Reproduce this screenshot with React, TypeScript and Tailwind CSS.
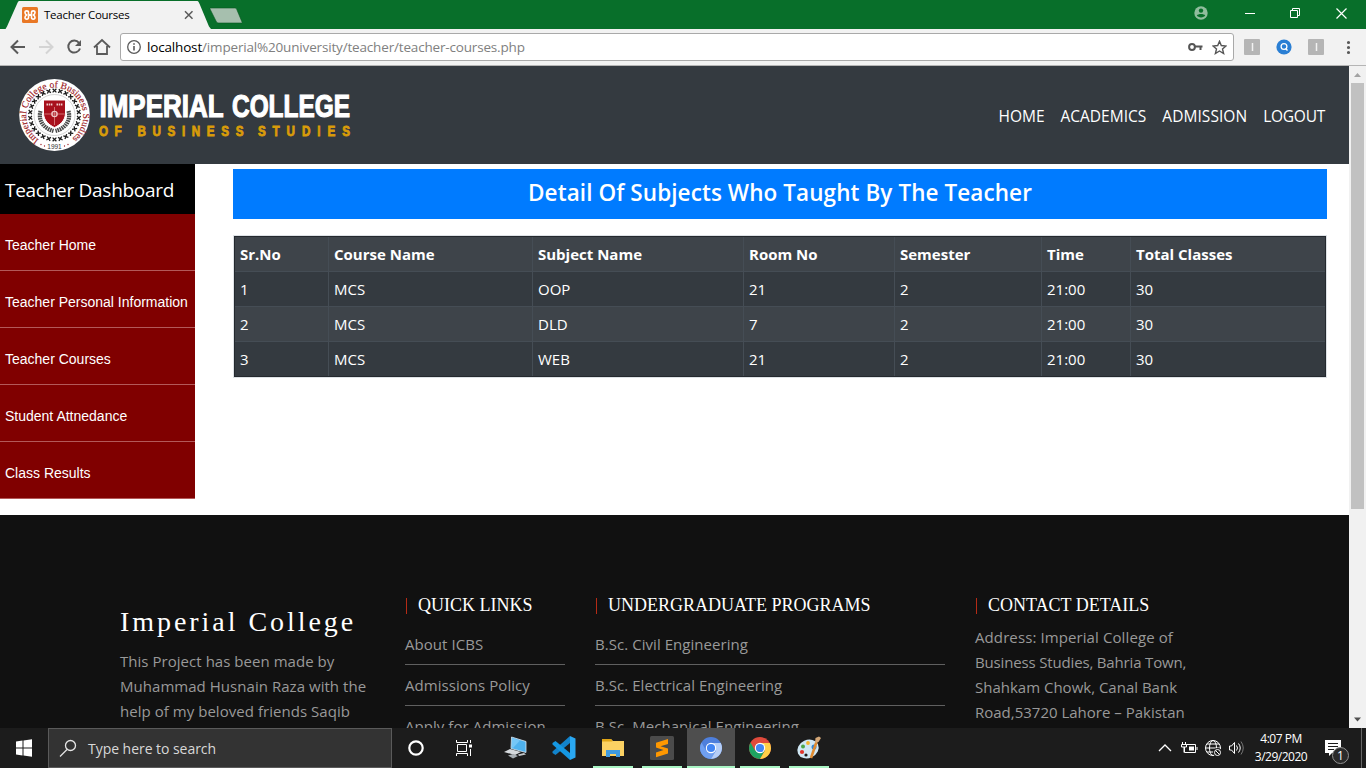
import React from 'react';

const SEGOE = "font-['Open_Sans','Noto_Sans',sans-serif]";

function TopIcons() {
  return (
    <div className="flex h-[26px] items-center text-white">
      <svg className="mr-[37px]" width="14" height="14" viewBox="0 0 14 14">
        <circle cx="7" cy="7" r="6.7" fill="#90bd9d" />
        <circle cx="7" cy="4.6" r="2.2" fill="#086f2a" />
        <path d="M2.8 9.6C4 7.6 10 7.6 11.2 9.6C10 12 4 12 2.8 9.6Z" fill="#086f2a" />
      </svg>
      <svg className="mr-[35px]" width="10" height="10" viewBox="0 0 10 10">
        <path d="M0 5.5H10" stroke="white" />
      </svg>
      <svg className="mr-[36px]" width="10" height="10" viewBox="0 0 10 10" fill="none" stroke="white">
        <path d="M0.5 2.5h7v7h-7zM2.5 2.5v-2h7v7h-2" />
      </svg>
      <svg className="mr-[19px]" width="11" height="11" viewBox="0 0 11 11">
        <path d="M0.5 0.5L10.5 10.5M10.5 0.5L0.5 10.5" stroke="white" strokeWidth="1.2" />
      </svg>
    </div>
  );
}

function TitleBar() {
  return (
    <div className="relative flex h-[29px] justify-end bg-[#086f2a]">
      <svg className="absolute left-0 top-0" width="250" height="29" viewBox="0 0 250 29">
        <path d="M5.500 29L7 26.500L17 4C18 1.500 18.500 1 20 1H196.500C198 1 198.600 1.500 199.600 4L209 26.500L211 29Z" fill="#f2f2f2" />
        <path d="M211 8H234.500C236 8 236.500 8.500 237 10L242 22C242.300 23 242 23 241 23H219C217.500 23 216.500 22.500 216 21L210 9C209.800 8 210 8 211 8Z" fill="#a6bfae" stroke="#07551f" strokeWidth="0.600" />
        <rect x="22" y="7" width="16" height="16" rx="1.500" fill="#e97826" />
        <path d="M28.500 12.500C28.500 10.300 25 10.300 25 12.500C25 14 25.800 14.500 26.600 15C25.800 15.500 25 16 25 17.500C25 19.700 28.500 19.700 28.500 17.500V16.200C28.500 14.600 31.500 15.400 31.500 13.800V12.500C31.500 10.300 35 10.300 35 12.500C35 14 34.200 14.500 33.400 15C34.200 15.500 35 16 35 17.500C35 19.700 31.500 19.700 31.500 17.500V16.200C31.500 14.600 28.500 15.400 28.500 13.800Z" fill="none" stroke="white" strokeWidth="1.600" />
        <path d="M185 11.300l7.500 7.500M192.500 11.300l-7.500 7.500" stroke="#5a5a5a" strokeWidth="1.500" />
      </svg>
      <span className={`${SEGOE} absolute left-[44px] top-[7px] text-[11.5px] leading-4 tracking-[-0.25px] whitespace-nowrap text-black`}>Teacher Courses</span>
      <TopIcons />
    </div>
  );
}

function Toolbar() {
  return (
    <div className="flex h-[37px] items-center border-b border-[#b5b5b5] bg-[#f2f2f2]">
      <svg width="120" height="36" viewBox="0 0 120 36" fill="none" strokeWidth="2">
        <path d="M25 18H12M18 11.500L11.500 18L18 24.500" stroke="#5a5a5a" />
        <path d="M39 18H52M46 11.500L52.500 18L46 24.500" stroke="#d4d4d4" />
        <path d="M79 13.800A6 6 0 1 0 80 19.500" stroke="#5a5a5a" />
        <path d="M81 11V17H75Z" fill="#5a5a5a" />
        <path d="M94 18.500L102 11L110 18.500M97 17V25H107V17" stroke="#5a5a5a" strokeWidth="1.800" />
      </svg>
      <div className="flex h-7 w-[1114px] items-center rounded-[3px] border border-[#a9a9a9] bg-white">
        <svg className="ml-[5px]" width="16" height="16" viewBox="0 0 16 16" fill="none" stroke="#5a5a5a">
          <circle cx="8" cy="8" r="6.300" strokeWidth="1.300" />
          <path d="M8 7V11.500M8 4.200V5.800" strokeWidth="1.600" />
        </svg>
        <span className={`${SEGOE} ml-[5px] grow text-[13.5px] tracking-[-0.17px] whitespace-nowrap text-[#808080]`}><span className="text-black">localhost</span>/imperial%20university/teacher/teacher-courses.php</span>
        <svg className="mr-[9px]" width="15" height="10" viewBox="0 0 15 10" fill="none" stroke="#555" strokeWidth="2">
          <circle cx="4" cy="5" r="2.900" />
          <path d="M7 4.500H14.500M12.500 4V8" />
        </svg>
        <svg className="mr-1.5" width="15" height="15" viewBox="0 0 15 15" fill="none" stroke="#555" strokeWidth="1.400">
          <path d="M7.500 1.300L9.300 5.500L14 6L10.500 9L11.600 13.500L7.500 11L3.400 13.500L4.500 9L1 6L5.700 5.500Z" />
        </svg>
      </div>
      <svg className="shrink-0" width="132" height="36" viewBox="0 0 132 36">
        <rect x="10" y="10" width="16" height="16" rx="1" fill="#b5b5b5" />
        <path d="M18.500 14V22" stroke="#f2f2f2" strokeWidth="1.500" />
        <circle cx="50" cy="18" r="7.600" fill="#2a7fd4" />
        <circle cx="50" cy="17.500" r="2.900" fill="none" stroke="white" strokeWidth="1.300" />
        <path d="M51.500 19.500L53.500 21.500" stroke="white" strokeWidth="1.400" />
        <rect x="74" y="10" width="16" height="16" rx="1" fill="#b5b5b5" />
        <path d="M82.500 14V22" stroke="#f2f2f2" strokeWidth="1.500" />
        <path d="M114.500 13.500h0M114.500 18.500h0M114.500 23.500h0" stroke="#5a5a5a" strokeWidth="3.200" strokeLinecap="round" />
      </svg>
    </div>
  );
}

const crossAngles = Array.from({ length: 26 }, (_, i) => (i * 360) / 26);

function Seal() {
  return (
    <svg className="overflow-visible" width="72" height="74" viewBox="-36.5 -37 72 74">
      <defs>
        <path id="ring" d="M-15.500 24.800A28.500 28.500 0 1 1 19 22.500" />
      </defs>
      <ellipse rx="35.300" ry="36" fill="white" />
      <text className="font-['Liberation_Serif',serif]" fontSize="9.500" fill="#9c1822" stroke="#9c1822" strokeWidth="0.150">
        <textPath href="#ring" textLength="143" lengthAdjust="spacing">Imperial College of Business Studies</textPath>
      </text>
      {crossAngles.map((a) => (
        <path key={a} transform={`rotate(${a})`} d="M-1.900 -26.200L1.900 -22.600M1.900 -26.200L-1.900 -22.600" stroke="#1a1a1a" strokeWidth="1.300" />
      ))}
      <circle r="20.500" fill="none" stroke="#bbb" strokeWidth="0.600" />
      <path d="M-14 -4C-17 7 -9 14 -1 16M14 -4C17 7 9 14 1 16" fill="none" stroke="#4a4a4a" strokeWidth="4.200" strokeDasharray="1.600 0.700" />
      <path d="M-11 -15H11V-2C11 6 4.500 10.500 0 12.500C-4.500 10.500 -11 6 -11 -2Z" fill="#a8101c" stroke="white" strokeWidth="1" />
      <path d="M0 -8V10M-10 -1H10" stroke="#d88" strokeWidth="0.800" />
      <circle cy="-1" r="2.600" fill="none" stroke="#eec6c6" strokeWidth="1.400" />
      <path d="M-8 -10.500h6M2 -10.500h6" stroke="#ecc" strokeWidth="2" strokeDasharray="1.500 0.700" />
      <text y="33.800" textAnchor="middle" className="font-['Liberation_Sans',sans-serif]" fontSize="6.500" fill="#333">1991</text>
      <path d="M-13.500 29.500h0M-10 31h0M13.500 29.500h0M10 31h0" stroke="#9c1822" strokeWidth="1.300" strokeLinecap="round" />
    </svg>
  );
}

function SiteHeader() {
  return (
    <header className="flex h-[98px] shrink-0 items-center justify-between bg-[#343a40] pr-6 pl-[18px]">
      <div className="flex items-center">
        <Seal />
        <svg className="ml-2 overflow-visible" width="256" height="60" viewBox="0 0 256 60">
          <g className="font-['Liberation_Sans_Narrow','Liberation_Sans',sans-serif]" fontWeight="bold">
            <g fontSize="32" fill="white" stroke="white" strokeWidth="1.200">
              <text x="1.500" y="31.500" textLength="124" lengthAdjust="spacingAndGlyphs">IMPERIAL</text>
              <text x="134" y="31.500" textLength="118" lengthAdjust="spacingAndGlyphs">COLLEGE</text>
            </g>
            <g transform="scale(0.78 1)" fontSize="15" fill="#d99c09" stroke="#d99c09" strokeWidth="0.900">
              <text x="1.300" y="51.500" textLength="29">OF</text>
              <text x="50.500" y="51.500" textLength="136">BUSINESS</text>
              <text x="205" y="51.500" textLength="118">STUDIES</text>
            </g>
          </g>
        </svg>
      </div>
      <nav className="flex gap-4 pt-[3px] text-[15.5px] text-white">
        <a>HOME</a>
        <a>ACADEMICS</a>
        <a className="tracking-[0.06px]">ADMISSION</a>
        <a className="tracking-[-0.25px]">LOGOUT</a>
      </nav>
    </header>
  );
}

const menu = ['Teacher Home', 'Teacher Personal Information', 'Teacher Courses', 'Student Attnedance', 'Class Results'];

function Sidebar() {
  return (
    <aside className="w-[195px] shrink-0">
      <h2 className="flex h-[50px] items-center bg-black pt-0.5 pl-[5px] text-[19px] tracking-[-0.28px] whitespace-nowrap text-white">Teacher Dashboard</h2>
      {menu.map((item) => (
        <a key={item} className="flex h-[57px] items-center border-b border-[#b35959] bg-[#800000] pt-1.5 pl-[5px] font-['Liberation_Sans',sans-serif] text-sm whitespace-nowrap text-white">{item}</a>
      ))}
    </aside>
  );
}

const rows = [
  ['Sr.No', 'Course Name', 'Subject Name', 'Room No', 'Semester', 'Time', 'Total Classes'],
  ['1', 'MCS', 'OOP', '21', '2', '21:00', '30'],
  ['2', 'MCS', 'DLD', '7', '2', '21:00', '30'],
  ['3', 'MCS', 'WEB', '21', '2', '21:00', '30'],
];

function Courses() {
  return (
    <main className="mt-[5px] mr-[22px] ml-[38px] grow">
      <h1 className="flex h-[50px] items-center justify-center bg-[#007bff] pb-0.5 text-[22.5px] font-semibold tracking-[0.08px] text-white">Detail Of Subjects Who Taught By The Teacher</h1>
      <div className="mt-4 border border-[#dee2e6]">
        <div className="border border-[#24292e] text-[15px] text-white">
          {rows.map((row, r) => (
            <div key={r} className={`grid grid-cols-[94px_204px_211px_151px_147px_89px_1fr] ${r === 3 ? 'h-[34px]' : 'h-[35px]'} ${r % 2 ? 'bg-[#343a40]' : 'bg-[#3e444a]'} ${r === 0 ? 'font-bold' : ''}`}>
              {row.map((cell, c) => (
                <div key={c} className={`flex items-center border-[#454d55] pl-[5px] whitespace-nowrap ${c < 6 ? 'border-r' : ''} ${r < 3 ? 'border-b' : ''}`}>{cell}</div>
              ))}
            </div>
          ))}
        </div>
      </div>
    </main>
  );
}

function LinkColumn({ title, links }: { title: string; links: string[] }) {
  return (
    <div>
      <FooterTitle>{title}</FooterTitle>
      <ul className="mt-2.5">
        {links.map((l) => (
          <li key={l} className="flex h-[41px] items-center border-b border-[#606060] text-[15px] tracking-[0.05px] whitespace-nowrap">{l}</li>
        ))}
      </ul>
    </div>
  );
}

function FooterTitle({ children }: { children: React.ReactNode }) {
  return (
    <h3 className="mt-[9px] ml-px flex h-4 items-center border-l border-[#b52b16] pb-0.5 pl-[11px] font-['Liberation_Serif',serif] text-[18px] leading-4 whitespace-nowrap text-white">{children}</h3>
  );
}

function SiteFooter() {
  return (
    <footer className="mt-4 grid h-[213px] shrink-0 grid-cols-[255px_160px_350px_225px] content-start gap-x-[30px] overflow-hidden bg-[#111] pt-[74px] pl-[120px] text-[#999]">
      <div className="pt-4">
        <h2 className="font-['Liberation_Serif',serif] text-[28px] leading-[34px] tracking-[2.95px] whitespace-nowrap text-white">Imperial College</h2>
        <p className="mt-2.5 text-[15px] leading-[25px] tracking-[0.04px] whitespace-nowrap">
          This Project has been made by<br />Muhammad Husnain Raza with the<br />help of my beloved friends Saqib
        </p>
      </div>
      <LinkColumn title="QUICK LINKS" links={['About ICBS', 'Admissions Policy', 'Apply for Admission']} />
      <LinkColumn title="UNDERGRADUATE PROGRAMS" links={['B.Sc. Civil Engineering', 'B.Sc. Electrical Engineering', 'B.Sc. Mechanical Engineering']} />
      <div>
        <FooterTitle>CONTACT DETAILS</FooterTitle>
        <p className="mt-[11px] text-[15px] leading-[25px] whitespace-nowrap">
          <span className="tracking-[0.1px]">Address: Imperial College of</span><br />
          <span className="tracking-[-0.16px]">Business Studies, Bahria Town,</span><br />Shahkam Chowk, Canal Bank<br />Road,53720 Lahore – Pakistan
        </p>
      </div>
    </footer>
  );
}

function Scrollbar() {
  return (
    <div className="flex w-[17px] shrink-0 flex-col items-center bg-[#f1f1f1]">
      <svg width="17" height="17" viewBox="0 0 17 17"><path d="M5 11L8.500 7L12 11Z" fill="#a3a3a3" /></svg>
      <div className="h-[426px] w-[13px] bg-[#c1c1c1]" />
      <div className="grow" />
      <svg width="17" height="17" viewBox="0 0 17 17"><path d="M5 6.500L8.500 10.500L12 6.500Z" fill="#505050" /></svg>
    </div>
  );
}

function ChromeLogo({ a, b, c, x }: { a: string; b: string; c: string; x: number }) {
  return (
    <g transform={`translate(${x} 20)`}>
      <circle r="11" fill={a} />
      <path d="M-9.500 -5.500A11 11 0 0 0 0 11L5 2.500L-5 2.500Z" fill={b} />
      <path d="M0 -5H9.800A11 11 0 0 1 0 11L5 2.500Z" fill={c} />
      <circle r="5.200" fill="white" />
      <circle r="4.100" fill="#4285f4" />
    </g>
  );
}

function Taskbar() {
  return (
    <div className={`${SEGOE} flex h-10 bg-[#1c1c1c] text-white`}>
      <svg width="48" height="40" viewBox="0 0 48 40">
        <path d="M16 13.500L22.500 12.600V19.500H16ZM23.500 12.400L32 11.200V19.500H23.500ZM16 20.500H22.500V27.400L16 26.500ZM23.500 20.500H32V28.800L23.500 27.600Z" fill="white" />
      </svg>
      <div className="flex w-[344px] items-center border border-[#5a5a5a] bg-[#333]">
        <svg className="ml-2.5" width="18" height="18" viewBox="0 0 18 18" fill="none" stroke="#e6e6e6" strokeWidth="1.300">
          <circle cx="11.500" cy="6.500" r="5" />
          <path d="M8 10.500L1 17.500" />
        </svg>
        <span className="ml-[11px] text-[14px] tracking-[-0.04px] text-[#d8d8d8]">Type here to search</span>
      </div>
      <svg width="448" height="40" viewBox="392 0 448 40">
        <circle cx="416" cy="20" r="6.700" fill="none" stroke="white" strokeWidth="2.200" />
        <path d="M457.500 16.500h9v7h-9zM456.500 12v2.500h11V12M456.500 28v-2.500h11V28" fill="none" stroke="white" />
        <path d="M470.500 12v3M470.500 21v7" stroke="white" />
        <path d="M469 16.500h3v3h-3z" fill="white" />
        <g>
          <path d="M511.500 9L526 13.500V24.500L511 20.500Z" fill="#4fb2ee" stroke="#dce9f2" strokeWidth="0.800" />
          <path d="M512 10L520 12.500L513 20L511.500 19.500Z" fill="#9bdcff" opacity="0.500" />
          <path d="M504 24L510 21L521 24L515 27Z" fill="#d5d9dc" />
          <path d="M508 27.500L513 26L518 28L513 30.500Z" fill="#a9b0b5" />
          <path d="M518 26.500L524 25L526 26.500L519 28Z" fill="#c3c8cc" />
        </g>
        <g>
          <path d="M570 8L575.500 10.500V29.500L570 32Z" fill="#2aa8f2" />
          <path d="M570 8V15L555.500 27L552.500 25V23.500Z" fill="#1283cb" />
          <path d="M570 32V25L555.500 13L552.500 15V16.500Z" fill="#1597e2" />
        </g>
        <path d="M602 11h9l2 2h11v15h-22z" fill="#fbd163" />
        <path d="M602 11h9l1.500 2.500H602z" fill="#e0a516" />
        <path d="M606 29v-7h14v7h-4v-3h-6v3z" fill="#3f9be0" />
        <rect x="650" y="8" width="24" height="24" rx="1.500" fill="#4b4b4b" />
        <path d="M656 14.800L668 11V16L660.500 18.300L668 20.600V25.500L656 29.300V24.500L663.500 22L656 19.600Z" fill="#ff9800" />
        <rect x="687" y="0" width="48" height="40" fill="#4e4e4e" />
        <ChromeLogo x={711} a="#4e7fdc" b="#6f9ff0" c="#b6cef7" />
        <ChromeLogo x={760} a="#e04a3c" b="#1da362" c="#ffcf48" />
        <ellipse cx="808" cy="21" rx="11" ry="9" transform="rotate(-25 808 21)" fill="#cfe7f4" />
        <circle cx="802" cy="24" r="2.100" fill="#e0342b" />
        <circle cx="803" cy="18.500" r="2" fill="#4ba649" />
        <circle cx="808" cy="15" r="1.900" fill="#f4b32c" />
        <circle cx="814" cy="19" r="2.500" fill="#3187d6" />
        <circle cx="806" cy="27" r="1.600" fill="#1c1c1c" />
        <path d="M811 30L816.500 14" stroke="#df8b31" strokeWidth="2.600" />
        <path d="M815 15L815.500 10L819 8.500L821 10L818.500 14Z" fill="#d5a878" />
        <path d="M593 38h40v2h-40zM642 38h40v2h-40zM687 38h48v2h-48zM740 38h40v2h-40zM789 38h40v2h-40z" fill="#a9f5c4" />
      </svg>
      <div className="grow" />
      <svg width="94" height="40" viewBox="1154 0 94 40" fill="none" stroke="white">
        <path d="M1159 23L1165 17L1171 23" strokeWidth="1.300" />
        <path d="M1184.500 16.500h11v8h-11zM1197 19v3" />
        <path d="M1189 18.500h5v4h-5z" fill="white" stroke="none" />
        <path d="M1182.500 14v3M1185.500 14v3M1181.500 16.500h5v2.500h-5zM1184 19v5.500" fill="#1c1c1c" />
        <circle cx="1213" cy="20" r="7.500" />
        <ellipse cx="1213" cy="20" rx="3.500" ry="7.500" />
        <path d="M1205.500 20h15M1207 16h12M1207 24h12" />
        <circle cx="1217.500" cy="24.500" r="4.500" fill="#1c1c1c" stroke="none" />
        <circle cx="1217.500" cy="24.500" r="3" />
        <path d="M1215.500 22.500l4 4" />
        <path d="M1229.500 18h2l3-3.500v11l-3-3.500h-2z" />
        <path d="M1236.500 17.500q2 2.500 0 5M1238.500 15.500q3.500 4.500 0 9" />
        <path d="M1241 13.500q4.500 6.500 0 13" stroke="#777" />
      </svg>
      <div className="flex w-[66px] flex-col items-center pt-0.5 text-[12px] leading-[18px] tracking-[-0.5px] whitespace-nowrap">
        <span>4:07 PM</span>
        <span>3/29/2020</span>
      </div>
      <svg width="52" height="40" viewBox="1314 0 52 40">
        <path d="M1325 12h16v13h-9l-3 3v-3h-4z" fill="white" />
        <path d="M1328 15.500h10M1328 18.500h10M1328 21.500h6" stroke="#1c1c1c" />
        <circle cx="1340.500" cy="27.500" r="8" fill="#2b2b2b" stroke="#929292" />
        <text x="1340.500" y="32" textAnchor="middle" fontSize="12" fill="white">1</text>
        <path d="M1361.500 0v40" stroke="#666" />
      </svg>
    </div>
  );
}

export default function App() {
  return (
    <div className="flex h-[768px] w-[1366px] flex-col overflow-hidden bg-white">
      <TitleBar />
      <Toolbar />
      <div className="flex h-[662px]">
        <div className={`${SEGOE} flex w-[1349px] flex-col`}>
          <SiteHeader />
          <div className="flex h-[335px] shrink-0">
            <Sidebar />
            <Courses />
          </div>
          <SiteFooter />
        </div>
        <Scrollbar />
      </div>
      <Taskbar />
    </div>
  );
}
